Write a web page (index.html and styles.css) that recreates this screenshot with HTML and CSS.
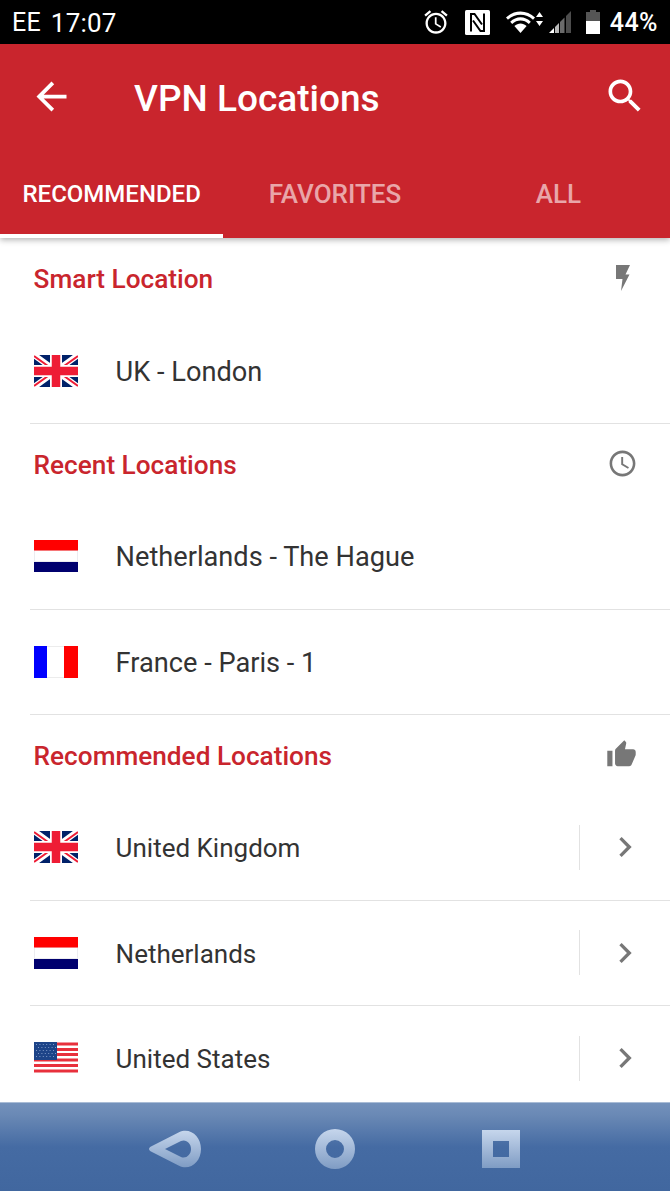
FILE: index.html
```html
<!DOCTYPE html>
<html lang="en">
<head>
<meta charset="utf-8">
<title>VPN Locations</title>
<link rel="stylesheet" href="styles.css">
</head>
<body>
<svg class="defs" aria-hidden="true">
  <defs>
    <linearGradient id="navgrad" x1="0" y1="0" x2="0" y2="1">
      <stop offset="0" stop-color="#c6d6ec"/>
      <stop offset="1" stop-color="#7f9cc4"/>
    </linearGradient>
    <symbol id="flag-uk" viewBox="0 0 44 32">
      <rect width="44" height="32" fill="#012169"/>
      <path d="M0 0L44 32M44 0L0 32" stroke="#fff" stroke-width="6"/>
      <path d="M0 1L14 11M44 31L30 21M44 1L30 11M0 31L14 21" stroke="#ee1c35" stroke-width="2"/>
      <path d="M22 0V32M0 16H44" stroke="#fff" stroke-width="12"/>
      <path d="M22 0V32M0 16H44" stroke="#ee1c35" stroke-width="8.500"/>
    </symbol>
    <symbol id="flag-nl" viewBox="0 0 44 32">
      <rect width="44" height="32" fill="#ececf0"/>
      <rect width="44" height="10.500" fill="#f00"/>
      <rect x="1" y="11" width="42" height="10" fill="#fff"/>
      <rect y="22" width="44" height="10" fill="#00006e"/>
    </symbol>
    <symbol id="flag-fr" viewBox="0 0 44 32">
      <rect width="44" height="32" fill="#ececec"/>
      <rect x="13" y="1" width="17" height="30" fill="#fff"/>
      <rect width="13" height="32" fill="#00f"/>
      <rect x="30" width="14" height="32" fill="#f00"/>
    </symbol>
    <symbol id="flag-us" viewBox="0 0 44 32">
      <rect width="44" height="32" fill="#fff"/>
      <path d="M0 2H44M0 7.500H44M0 12.500H44M0 18H44M0 23.500H44M0 29H44" stroke="#e8303c" stroke-width="2.800"/>
      <rect width="23" height="18" fill="#1d4488"/>
      <path d="M2 2.500H22M4 5.500H22M2 8.500H22M4 11.500H22M2 14.500H22" stroke="#7f9ac8" stroke-width="1" stroke-dasharray="1 2.400"/>
    </symbol>
    <symbol id="chev" viewBox="0 0 24 24">
      <path d="M10 6L8.590 7.410 13.170 12l-4.580 4.590L10 18l6-6z"/>
    </symbol>
  </defs>
</svg>

<div class="phone">
  <header class="status">
    <div class="status-left">
      <span class="carrier">EE</span>
      <span class="time">17:07</span>
    </div>
    <div class="status-right">
      <svg class="s-alarm" viewBox="0 0 24 24"><path d="M22 5.720l-4.600-3.860-1.290 1.530 4.600 3.860L22 5.720zM7.880 3.390L6.600 1.860 2 5.710l1.290 1.530 4.590-3.850zM12.500 8H11v6l4.750 2.850.75-1.230-4-2.370V8zM12 4c-4.970 0-9 4.030-9 9s4.020 9 9 9c4.970 0 9-4.030 9-9s-4.030-9-9-9zm0 16c-3.870 0-7-3.130-7-7s3.130-7 7-7 7 3.130 7 7-3.130 7-7 7z"/></svg>
      <svg class="s-nfc" viewBox="0 0 25 25"><rect width="25" height="25" rx="1.500" fill="#fff"/><path d="M6 21.500V4H9.500L17 14.500M19 3.500V21H15.500L8 10.500" fill="none" stroke="#000" stroke-width="2"/></svg>
      <svg class="s-wifi" viewBox="0 0 37 23">
        <path d="M0 6.500C8-1.500 21-1.500 29 6.500L27 8.800C20 2 9 2 2 8.800z"/>
        <path d="M4.200 10.800C10 4.800 19 4.800 24.800 10.800L22.800 13C18 8.400 11 8.400 6.200 13z"/>
        <path d="M8.400 15C12 11.500 17 11.500 20.600 15L14.500 22z"/>
        <path d="M33.500 1L37 6H30zM33.500 15L30 10H37z"/>
      </svg>
      <svg class="s-signal" viewBox="0 0 22 22">
        <path d="M0 22L5 17V22z" fill="#fff"/>
        <path d="M6 16L10 12V22H6z" fill="#fff" opacity=".72"/>
        <path d="M11 11L15.500 6.500V22H11z" fill="#fff" opacity=".42"/>
        <path d="M17 5L22 0V22H17z" fill="#fff" opacity=".3"/>
      </svg>
      <svg class="s-batt" viewBox="0 0 14 24">
        <path d="M4 0H10V2H14V24H0V2H4z" fill="#555"/>
        <rect y="11" width="14" height="13" fill="#fff"/>
      </svg>
      <span class="pct">44%</span>
    </div>
  </header>

  <div class="appbar">
    <div class="toolbar">
      <svg class="ic-back" viewBox="0 0 24 24"><path d="M20 11H7.830l5.590-5.590L12 4l-8 8 8 8 1.410-1.410L7.830 13H20v-2z"/></svg>
      <h1 class="title">VPN Locations</h1>
      <svg class="ic-search" viewBox="0 0 24 24"><path d="M15.500 14h-.790l-.280-.270C15.410 12.590 16 11.110 16 9.500 16 5.910 13.090 3 9.500 3S3 5.910 3 9.500 5.910 16 9.500 16c1.610 0 3.090-.590 4.230-1.570l.270.280v.790l5 4.990L20.490 19l-4.990-5zm-6 0C7.010 14 5 11.990 5 9.500S7.010 5 9.500 5 14 7.010 14 9.500 11.990 14 9.500 14z"/></svg>
    </div>
    <nav class="tabs">
      <div class="tab tab-active">RECOMMENDED</div>
      <div class="tab">FAVORITES</div>
      <div class="tab">ALL</div>
    </nav>
  </div>

  <main class="list">
    <section>
      <div class="sec-head">
        <h2 class="sec-title">Smart Location</h2>
        <svg class="ic-bolt" viewBox="0 0 15 26"><path d="M1 0H15L10.500 9.500H14.500L6 26 7.500 14H1z"/></svg>
      </div>
      <div class="row">
        <svg class="flag"><use href="#flag-uk"/></svg>
        <span class="name">UK - London</span>
      </div>
    </section>

    <section>
      <div class="sec-head">
        <h2 class="sec-title">Recent Locations</h2>
        <svg class="ic-clock" viewBox="0 0 24 24"><path d="M11.990 2C6.470 2 2 6.480 2 12s4.470 10 9.990 10C17.520 22 22 17.520 22 12S17.520 2 11.990 2zM12 20c-4.420 0-8-3.580-8-8s3.580-8 8-8 8 3.580 8 8-3.580 8-8 8zm.5-13H11v6l5.250 3.150.75-1.230-4.500-2.670z"/></svg>
      </div>
      <div class="row">
        <svg class="flag"><use href="#flag-nl"/></svg>
        <span class="name">Netherlands - The Hague</span>
      </div>
      <div class="row">
        <svg class="flag"><use href="#flag-fr"/></svg>
        <span class="name">France - Paris - 1</span>
      </div>
    </section>

    <section>
      <div class="sec-head">
        <h2 class="sec-title">Recommended Locations</h2>
        <svg class="ic-thumb" viewBox="0 0 24 24"><path d="M1 21h4V9H1v12zm22-11c0-1.100-.9-2-2-2h-6.310l.95-4.570.030-.320c0-.410-.170-.790-.440-1.060L14.170 1 7.590 7.590C7.220 7.950 7 8.450 7 9v10c0 1.100.9 2 2 2h9c.830 0 1.540-.5 1.840-1.220l3.020-7.050c.090-.230.140-.470.140-.730v-2z"/></svg>
      </div>
      <div class="row">
        <svg class="flag"><use href="#flag-uk"/></svg>
        <span class="name name-country">United Kingdom</span>
        <div class="more"><svg class="ic-chev"><use href="#chev"/></svg></div>
      </div>
      <div class="row">
        <svg class="flag"><use href="#flag-nl"/></svg>
        <span class="name name-country">Netherlands</span>
        <div class="more"><svg class="ic-chev"><use href="#chev"/></svg></div>
      </div>
      <div class="row">
        <svg class="flag"><use href="#flag-us"/></svg>
        <span class="name name-country">United States</span>
        <div class="more"><svg class="ic-chev"><use href="#chev"/></svg></div>
      </div>
    </section>
  </main>

  <footer class="navbar">
    <svg class="nav-back" viewBox="0 0 52 38"><path fill="url(#navgrad)" fill-rule="evenodd" d="M2 16.500L30 2.200C41 -3 52 6 52 19S41 41 30 35.800L2 21.500C-.6 20 -.6 18 2 16.500zM16 19L32 27C37 29 42 25 42 19S37 9 32 11z"/></svg>
    <svg class="nav-home" viewBox="0 0 40 40"><path fill="url(#navgrad)" fill-rule="evenodd" d="M20 0A20 20 0 1 1 20 40A20 20 0 1 1 20 0zM20 11A9 9 0 1 0 20 29A9 9 0 1 0 20 11z"/></svg>
    <svg class="nav-recent" viewBox="0 0 38 38"><path fill="url(#navgrad)" fill-rule="evenodd" d="M0 0H38V38H0zM11 11V27H27V11z"/></svg>
  </footer>
</div>
</body>
</html>
```

FILE: styles.css
```css
* { box-sizing: border-box; }

html, body {
  margin: 0;
  padding: 0;
  height: 100%;
  overflow: hidden;
  background: #fff;
}

body {
  font-family: Roboto, "Liberation Sans", sans-serif;
}

.defs {
  width: 0;
  height: 0;
  display: block;
  overflow: hidden;
}

.phone {
  width: 670px;
  height: 1191px;
  display: flex;
  flex-direction: column;
  overflow: hidden;
}

/* Status bar */
.status {
  flex: 0 0 44px;
  height: 44px;
  background: #000;
  color: #fff;
  display: flex;
  align-items: center;
  justify-content: space-between;
  padding: 0 12px;
}

.status-left {
  display: flex;
  align-items: center;
  gap: 10px;
  font-size: 26px;
  line-height: 38px;
  letter-spacing: .2px;
  padding-top: 2px;
}

.carrier { font-size: 25px; }

.status-right {
  display: flex;
  align-items: center;
  fill: #fff;
}

.s-alarm { width: 28px; height: 28px; margin-right: 15px; }
.s-nfc { width: 25px; height: 25px; margin-right: 16px; }
.s-wifi { width: 37px; height: 23px; margin-right: 6px; }
.s-signal { width: 22px; height: 22px; margin-right: 15px; }
.s-batt { width: 14px; height: 24px; margin-right: 10px; }

.pct {
  font-size: 25px;
  line-height: 38px;
  font-weight: 500;
  letter-spacing: .5px;
  padding-top: 2px;
}

/* App bar */
.appbar {
  flex: 0 0 194px;
  background: #c9252d;
  color: #fff;
  display: flex;
  flex-direction: column;
  box-shadow: 0 2px 6px rgba(0, 0, 0, .3);
  position: relative;
  z-index: 1;
}

.toolbar {
  flex: 0 0 105px;
  display: flex;
  align-items: center;
  padding-left: 29px;
  padding-right: 23px;
  fill: #fff;
}

.ic-back { width: 45px; height: 45px; margin-top: -1px; }
.ic-search { width: 44px; height: 44px; margin-top: -1px; }

.title {
  flex: 1;
  margin: 4px 0 0 60px;
  font-size: 37px;
  font-weight: 500;
  line-height: 44px;
}

.tabs {
  flex: 1;
  display: flex;
}

.tab {
  flex: 1;
  text-align: center;
  font-size: 26px;
  font-weight: 500;
  line-height: 32px;
  padding-top: 29px;
  color: rgba(255, 255, 255, .6);
}

.tab-active {
  color: #fff;
  font-size: 24px;
  border-bottom: 4px solid #fff;
}

/* List */
.list {
  flex: 1;
  min-height: 0;
  overflow: hidden;
}

.sec-head {
  height: 80.6px;
  display: flex;
  align-items: center;
  justify-content: space-between;
  padding: 1px 34px 0 33.6px;
  fill: #777;
}

.sec-title {
  margin: 0;
  font-size: 26.2px;
  font-weight: 500;
  color: #c9252d;
}

.ic-bolt { width: 15px; height: 26px; margin-right: 6px; margin-top: -2px; }
.ic-clock { width: 31px; height: 31px; margin-right: -2px; margin-top: -2px; }
.ic-thumb { width: 31px; height: 31px; margin-right: -1px; margin-top: -2px; }

.row {
  height: 105.2px;
  margin-left: 30px;
  padding-left: 4px;
  display: flex;
  align-items: center;
  border-bottom: 1px solid #e2e2e2;
}

section:last-child .row:last-child { border-bottom: 0; }

.flag {
  width: 44px;
  height: 32px;
  flex: none;
}

.name {
  flex: 1;
  margin-left: 37.6px;
  padding-top: 2px;
  font-size: 27.2px;
  color: #333;
}

.name-country { font-size: 26px; }

.more {
  height: 45px;
  width: 91px;
  flex: none;
  border-left: 1px solid #e2e2e2;
  display: flex;
  align-items: center;
  padding-left: 25px;
  fill: #777;
}

.ic-chev { width: 40px; height: 40px; }

/* Navigation bar */
.navbar {
  flex: 0 0 89px;
  background: linear-gradient(#7391bb 0, #6a89b5 12px, #456ba3 44px, #41679f 100%);
  border-top: 1px solid #a9bcd6;
  display: flex;
  align-items: center;
  padding: 4px 0 0 149px;
}

.nav-back { width: 52px; height: 38px; }
.nav-home { width: 40px; height: 40px; margin-left: 114px; }
.nav-recent { width: 38px; height: 38px; margin-left: 127px; }
```
